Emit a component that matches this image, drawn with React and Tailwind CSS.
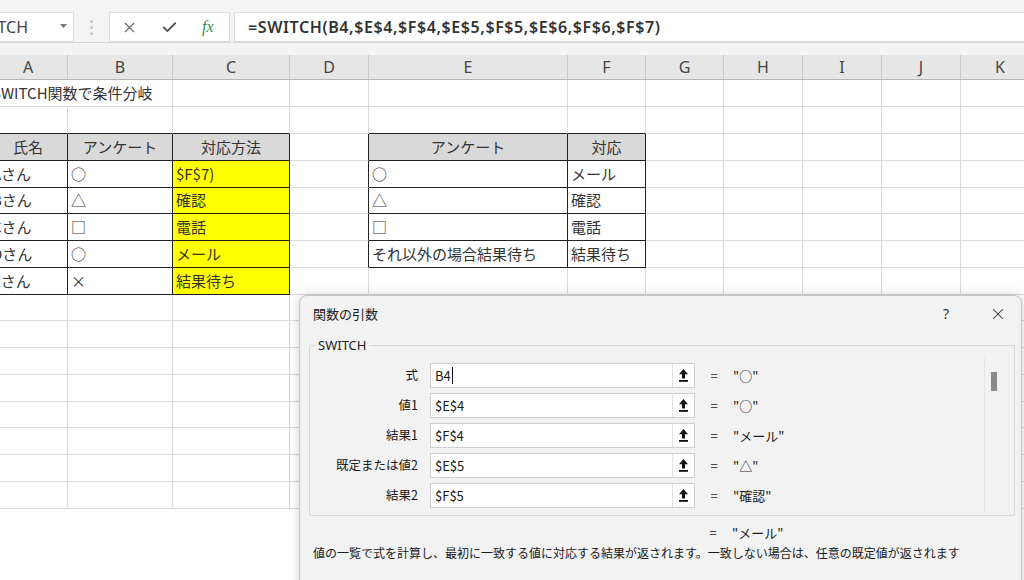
import React from 'react';
import { X, Check } from 'lucide-react';

const COLS = [
  { name: 'A', w: 'w-[79px]' },
  { name: 'B', w: 'w-[105px]' },
  { name: 'C', w: 'w-[117px]' },
  { name: 'D', w: 'w-[79px]' },
  { name: 'E', w: 'w-[199px]' },
  { name: 'F', w: 'w-[78px]' },
  { name: 'G', w: 'w-[78px]' },
  { name: 'H', w: 'w-[79px]' },
  { name: 'I', w: 'w-[79px]' },
  { name: 'J', w: 'w-[79px]' },
  { name: 'K', w: 'w-[79px]' },
];

const ROWS = [
  { h: 'h-[27px]', cells: { A: 'SWITCH関数で条件分岐' } },
  { h: 'h-[27px]', cells: {} },
  { h: 'h-[27px]', cells: { A: '氏名', B: 'アンケート', C: '対応方法', E: 'アンケート', F: '対応' } },
  { h: 'h-[27px]', cells: { A: 'Aさん', B: '○', C: '$F$7)', E: '○', F: 'メール' } },
  { h: 'h-[26px]', cells: { A: 'Bさん', B: '△', C: '確認', E: '△', F: '確認' } },
  { h: 'h-[27px]', cells: { A: 'Cさん', B: '□', C: '電話', E: '□', F: '電話' } },
  { h: 'h-[27px]', cells: { A: 'Dさん', B: '○', C: 'メール', E: 'それ以外の場合結果待ち', F: '結果待ち' } },
  { h: 'h-[27px]', cells: { A: 'Eさん', B: '×', C: '結果待ち' } },
  { h: 'h-[26px]', cells: {} },
  { h: 'h-[27px]', cells: {} },
  { h: 'h-[27px]', cells: {} },
  { h: 'h-[27px]', cells: {} },
  { h: 'h-[26px]', cells: {} },
  { h: 'h-[27px]', cells: {} },
  { h: 'h-[27px]', cells: {} },
  { h: 'h-[27px]', cells: {} },
];

const ARGS = [
  { label: '式', value: 'B4', result: '"○"', caret: true },
  { label: '値1', value: '$E$4', result: '"○"' },
  { label: '結果1', value: '$F$4', result: '"メール"' },
  { label: '既定または値2', value: '$E$5', result: '"△"' },
  { label: '結果2', value: '$F$5', result: '"確認"' },
];

const inT1 = (r, c) => r >= 3 && r <= 8 && ['A', 'B', 'C'].includes(c);
const inT2 = (r, c) => r >= 3 && r <= 7 && ['E', 'F'].includes(c);

const Cell = ({ r, c, w, text }) => {
  const rightBlack = inT1(r, c) || inT2(r, c) || (c === 'D' && r >= 3 && r <= 7);
  const bottomBlack = inT1(r, c) || inT2(r, c) || (r === 2 && ['A', 'B', 'C', 'E', 'F'].includes(c));
  const header = r === 3 && (inT1(r, c) || inT2(r, c));
  const yellow = c === 'C' && r >= 4 && r <= 8;
  const overflow = r === 1 && c === 'A';

  let rightCls = rightBlack ? 'border-r-[#222]' : 'border-r-[#dadada]';
  if (overflow) rightCls = 'border-r-white';
  const bottomCls = bottomBlack ? 'border-b-[#222]' : 'border-b-[#dadada]';
  const bg = header ? 'bg-[#d9d9d9]' : yellow ? 'bg-[#ffff00]' : '';

  return (
    <div
      className={`${w} shrink-0 h-full border-r border-b ${rightCls} ${bottomCls} ${bg} flex items-center whitespace-nowrap ${
        header ? 'justify-center' : 'pl-[3px]'
      } ${overflow ? 'overflow-visible relative z-10' : 'overflow-hidden'}`}
    >
      {text}
    </div>
  );
};

const UploadIcon = () => (
  <svg width="11" height="15" viewBox="0 0 11 15">
    <path d="M5.5 1 L10 6.2 H7 V10.5 H4 V6.2 H1 Z" fill="#111" />
    <rect x="1" y="12" width="9" height="1.8" fill="#111" />
  </svg>
);

const App = () => {
  return (
    <div className="w-[1024px] h-[580px] overflow-hidden relative bg-white font-['Noto_Sans_CJK_JP',sans-serif]">
      {/* toolbar + formula bar */}
      <div className="h-[55px] bg-[#f3f3f3] pt-[12px]">
        <div className="flex items-stretch h-[31px] border-b border-[#d4d4d4]">
          <div className="w-[74px] bg-white border border-[#dcdcdc] border-l-0 flex items-center overflow-hidden shrink-0">
            <div className="flex-1 overflow-hidden flex justify-end pr-[2px]">
              <span className="text-[16px] text-[#444] font-['Noto_Sans',sans-serif] leading-none whitespace-nowrap -ml-[40px] mr-[30px]">
                SWITCH
              </span>
            </div>
            <svg width="7" height="4" viewBox="0 0 7 4" className="mr-[6px] -mt-[2px]">
              <path d="M0 0 H7 L3.5 4 Z" fill="#777" />
            </svg>
          </div>
          <div className="w-[35px] flex flex-col items-center justify-center gap-[3px] shrink-0">
            <div className="w-[3px] h-[3px] rounded-full bg-[#c4c4c4]" />
            <div className="w-[3px] h-[3px] rounded-full bg-[#c4c4c4]" />
            <div className="w-[3px] h-[3px] rounded-full bg-[#c4c4c4]" />
          </div>
          <div className="w-[121px] bg-white border border-[#dcdcdc] flex items-center shrink-0">
            <X size={17} strokeWidth={1.6} className="text-[#666] ml-[11px]" />
            <Check size={17} strokeWidth={2.6} className="text-[#555] ml-[23px]" />
            <span className="ml-[24px] text-[#2e8b57] italic font-['Liberation_Serif',serif] text-[16px] leading-none">
              fx
            </span>
          </div>
          <div className="flex-1 ml-[4px] bg-white border border-[#dcdcdc] border-r-0 flex items-center pl-[13px]">
            <span className="text-[16px] tracking-[0.6px] font-semibold text-[#333] font-['Noto_Sans',sans-serif] whitespace-nowrap">
              =SWITCH(B4,$E$4,$F$4,$E$5,$F$5,$E$6,$F$6,$F$7)
            </span>
          </div>
        </div>
      </div>

      {/* column headers */}
      <div className="h-[25px] bg-[#e6e6e6] border-b border-[#b5b5b5] flex -ml-[11px]">
        {COLS.map((col) => (
          <div
            key={col.name}
            className={`${col.w} shrink-0 h-full border-r border-[#c9c9c9] flex items-center justify-center text-[16px] text-[#444] font-['Noto_Sans',sans-serif]`}
          >
            {col.name}
          </div>
        ))}
      </div>

      {/* cells */}
      <div className="-ml-[11px] text-[15px] text-[#333]">
        {ROWS.map((row, i) => (
          <div key={i} className={`${row.h} flex`}>
            {COLS.map((col) => (
              <Cell key={col.name} r={i + 1} c={col.name} w={col.w} text={row.cells[col.name]} />
            ))}
          </div>
        ))}
      </div>

      {/* function arguments dialog */}
      <div className="absolute left-[299px] top-[295px] w-[723px] h-[300px] bg-[#f2f2f2] border border-[#c4c4c4] rounded-t-[8px] shadow-[0_0_12px_rgba(0,0,0,0.18)] text-[#1a1a1a] z-20">
        <div className="h-[35px] flex items-center pl-[13px] pr-[14px]">
          <span className="text-[13px]">関数の引数</span>
          <span className="ml-auto text-[14px] text-[#333] font-['Noto_Sans',sans-serif]">?</span>
          <X size={18} strokeWidth={1.4} className="ml-[40px] text-[#333]" />
        </div>

        <fieldset className="ml-[9px] mt-[8px] w-[706px] h-[177px] border border-[#d8d8d8] rounded-[2px] flex">
          <legend className="ml-[5px] px-[3px] text-[13px] text-[#222] font-['Noto_Sans',sans-serif] leading-none">
            SWITCH
          </legend>
          <div className="flex flex-col gap-[5px] pt-[11px]">
            {ARGS.map((a) => (
              <div key={a.label} className="h-[25px] flex items-center">
                <div className="w-[108px] text-right text-[12.5px] whitespace-nowrap">{a.label}</div>
                <div className="ml-[12px] w-[265px] h-[25px] bg-white border border-[#cfcfcf] flex items-center">
                  <span className="pl-[4px] text-[13px] flex-1 flex items-center">
                    {a.value}
                    {a.caret && <span className="ml-[1px] w-px h-[17px] bg-[#111]" />}
                  </span>
                  <div className="w-[22px] h-full border-l border-[#e2e2e2] flex items-center justify-center">
                    <UploadIcon />
                  </div>
                </div>
                <div className="w-[38px] text-center text-[13px]">=</div>
                <div className="text-[13px] whitespace-nowrap">{a.result}</div>
              </div>
            ))}
          </div>
          <div className="ml-auto mr-[17px] mt-[6px] mb-[4px] w-[13px] border-l border-[#e4e4e4] flex justify-end pt-[14px]">
            <div className="w-[6px] h-[19px] bg-[#8a8a8a]" />
          </div>
        </fieldset>

        <div className="flex mt-[7px] text-[13px]">
          <div className="w-[394px] shrink-0" />
          <div className="w-[38px] text-center">=</div>
          <div>"メール"</div>
        </div>
        <div className="pl-[13px] mt-[1px] text-[12px] whitespace-nowrap">
          値の一覧で式を計算し、最初に一致する値に対応する結果が返されます。一致しない場合は、任意の既定値が返されます
        </div>
      </div>
    </div>
  );
};

export default App;
